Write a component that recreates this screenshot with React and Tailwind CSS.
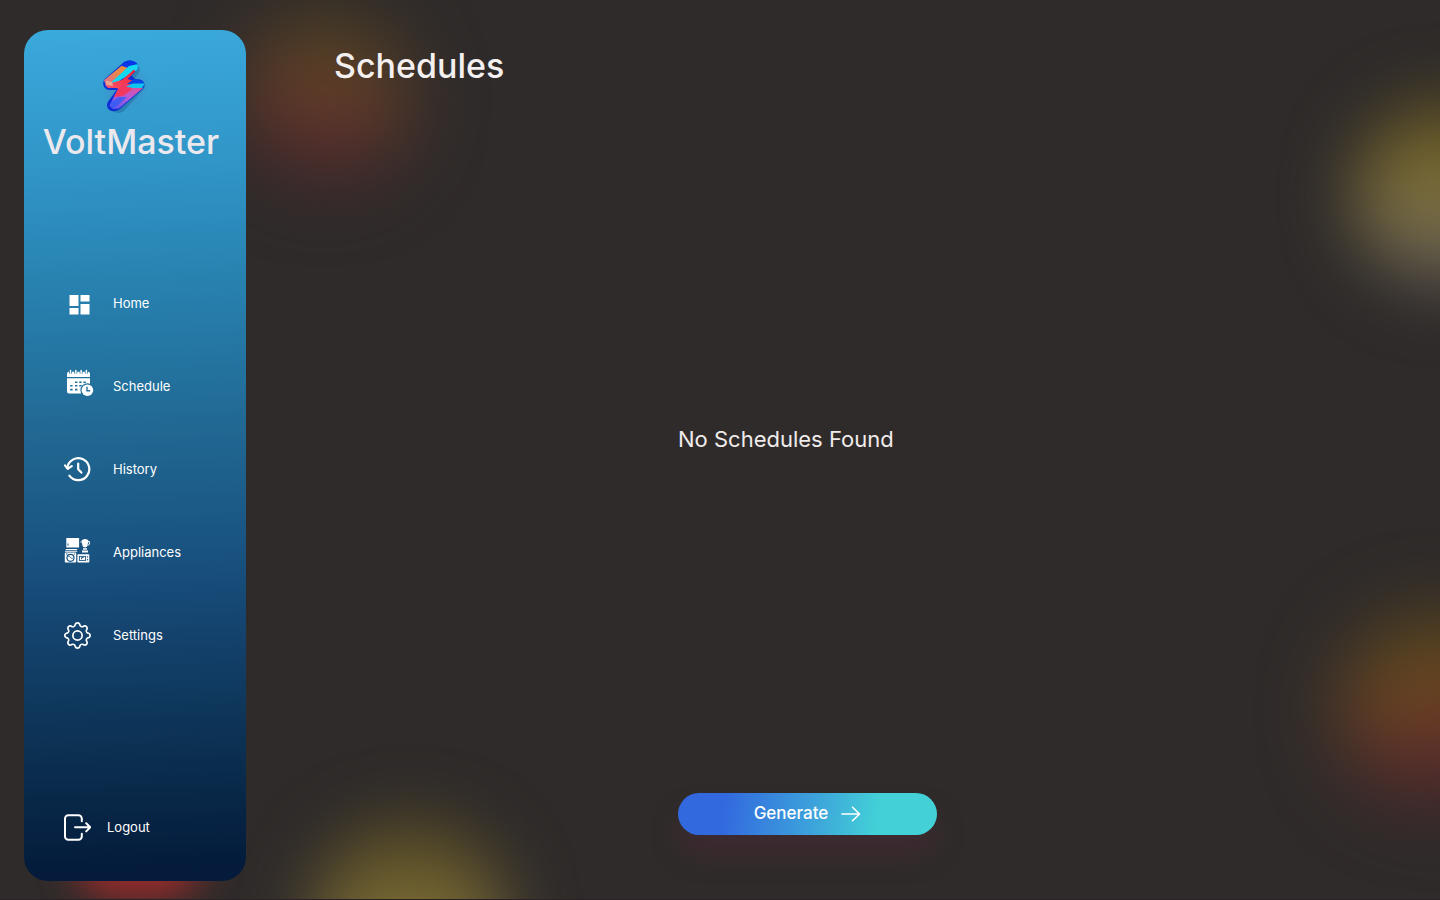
import React from "react";
import { BsGear } from "react-icons/bs";

function HomeIcon() {
  return (
    <svg width="27" height="27" viewBox="0 0 27 27" fill="currentColor" className="shrink-0" aria-hidden="true">
      <rect x="5.5" y="5" width="9" height="11" />
      <rect x="16.5" y="5" width="9" height="6.5" />
      <rect x="5.5" y="18" width="9" height="6.5" />
      <rect x="16.5" y="14" width="9" height="10.5" />
    </svg>
  );
}

function ScheduleIcon() {
  return (
    <svg width="27" height="27" viewBox="0 0 27 27" className="shrink-0 overflow-visible" aria-hidden="true">
      <path
        fill="currentColor"
        d="M5 -1.3H24a2 2 0 0 1 2 2V4H3V.7a2 2 0 0 1 2-2zM3 5.2H26V12.4A7 7 0 0 0 17.4 20.5H5a2 2 0 0 1-2-2z"
      />
      <path d="M6.500-2.500v3M11.800-2.500v3M17.100-2.500v3M22.400-2.500v3" stroke="#23739f" strokeWidth="3" />
      <path d="M6.500-2.500v2.600M11.800-2.500v2.600M17.100-2.500v2.600M22.400-2.500v2.600" stroke="currentColor" strokeWidth="1.5" strokeLinecap="round" />
      <path
        fill="#226f9b"
        d="M11 8.4h2.4v1.6H11zM15.2 8.4h2.4v1.6h-2.4zM19.4 8.4h2.4v1.6h-2.4zM6.2 12h2.4v1.6H6.2zM11 12h2.4v1.6H11zM15.2 12h2.4v1.6h-2.4zM6.2 15.8h2.4v1.6H6.2zM11 15.8h2.4v1.6H11z"
      />
      <circle cx="23.4" cy="17.2" r="7" fill="#226f9b" />
      <circle cx="23.4" cy="17.2" r="5.8" fill="currentColor" />
      <path d="M23 13.8v4h3.2" fill="none" stroke="#226f9b" strokeWidth="1.4" />
    </svg>
  );
}

function HistoryIcon() {
  return (
    <svg
      width="27" height="27" viewBox="0 0 27 27" fill="none" stroke="currentColor"
      strokeWidth="2.2" strokeLinecap="round" strokeLinejoin="round" className="shrink-0" aria-hidden="true"
    >
      <path d="M3.4 11.8A11 11 0 1 1 5.4 19.6" />
      <path d="M1 9.3l2.7 3.6 4-2.7" />
      <path d="M14.2 7.6v5.6l3.2 3.4" />
    </svg>
  );
}

function AppliancesIcon() {
  return (
    <svg width="27" height="27" viewBox="0 0 27 27" className="shrink-0 overflow-visible" aria-hidden="true">
      <g transform="translate(0 -1)">
        <g fill="currentColor">
          <rect x="2.3" y="0" width="12.8" height="9.6" rx=".6" />
          <path d="M1.8 11h11.4v.9H1.8zM1 12.8h12.2v1H1z" />
          <path d="M17.6 2.400L19 1.600Q21 .2 23.200 1.600L24.400 2.400L23.600 7.600Q23.200 9.600 21 9.600Q18.800 9.600 18.400 7.600zM19 10.3h4v1.400h-4zM18 12.600h6v1.800h-6z" />
          <rect x=".8" y="14.6" width="11.4" height="10" rx=".8" />
          <rect x="13.4" y="16.2" width="11.9" height="8.4" rx=".8" />
        </g>
        <path d="M18.200 4H16.400M24 3.600h1.400v2.800l-1.600 1" fill="none" stroke="currentColor" strokeWidth="1" />
        <g fill="none" stroke="#1a5582">
          <path d="M4 5.4v2.4" strokeWidth=".9" />
          <circle cx="6.5" cy="19.8" r="3.5" strokeWidth="1.2" />
          <path d="M4.4 18.4c1.5-.7 2.7 2.8 4.3 1.8M2 16h1.5M10 16h1" strokeWidth=".9" />
          <rect x="15.4" y="18.4" width="6.2" height="4" strokeWidth=".9" />
          <path d="M17.6 21.2v-1.6h2M23.6 18.2v1.4M23.6 21v1.4" strokeWidth="1" />
        </g>
      </g>
    </svg>
  );
}

function LogoutIcon() {
  return (
    <svg
      width="27" height="27" viewBox="0 0 27 27" fill="none" stroke="currentColor"
      strokeWidth="2" strokeLinecap="round" strokeLinejoin="round" className="shrink-0" aria-hidden="true"
    >
      <path d="M17.8 7.3V4.6A3.4 3.4 0 0 0 14.4 1.2H4.4A3.4 3.4 0 0 0 1 4.6V22.4a3.4 3.4 0 0 0 3.4 3.4h10a3.4 3.4 0 0 0 3.4-3.4V19.8" />
      <path d="M11 13.3H26M22.2 9.2l4 4.1-4 4.1" />
    </svg>
  );
}

function BoltLogo() {
  return (
    <svg width="46" height="54" viewBox="0 0 46 54" className="overflow-visible" aria-hidden="true">
      <defs>
        <linearGradient id="boltTop" x1="0" y1="1" x2="1" y2="0">
          <stop offset="0" stopColor="#d9689c" />
          <stop offset=".5" stopColor="#e98450" />
          <stop offset="1" stopColor="#f0962f" />
        </linearGradient>
        <linearGradient id="boltMid" x1="1" y1="0" x2="0" y2="1">
          <stop offset="0" stopColor="#e8203f" />
          <stop offset=".6" stopColor="#fb4052" />
          <stop offset="1" stopColor="#f05a7a" />
        </linearGradient>
        <linearGradient id="boltLow" x1=".7" y1="0" x2=".2" y2="1">
          <stop offset="0" stopColor="#e0509a" />
          <stop offset=".5" stopColor="#b55ad8" />
          <stop offset="1" stopColor="#5a58ee" />
        </linearGradient>
        <clipPath id="boltShape">
          <path d="M21.500 2.500C25-.5 31.500-.2 34.500 3C37 6 36.200 9.200 33 12L29.500 15.500L33.500 19.600H37C42.500 20.200 44 25.500 40 29.500L18.500 48.500C15 51.800 8.500 52.500 6 48.500C4 45 5.200 42 8 39L14.500 30H8C1.500 29.500-.8 23 3.200 18.500z" />
        </clipPath>
      </defs>
      <path
        fill="#1f6799"
        opacity=".5"
        d="M34 4c4 2 5 7 2 10l-3 4 4 2c6 1 8 6 4 10L21.500 51.500c-4 2-8 2-12-1z"
      />
      <g clipPath="url(#boltShape)">
        <rect x="-2" y="-2" width="50" height="58" fill="#0c2fd6" />
        <path d="M2 20L20 5.500h12L12 26.500H4z" fill="url(#boltTop)" />
        <path d="M20 6L22 0h16l-2 6-10 2z" fill="#0838e8" />
        <path d="M8 23.500L27 6l9-2v6L20 19l-9 6z" fill="#13d8f2" />
        <path d="M4 25.500l7-3 9-2.500L32 9.500l1.500 2L25.500 19l8 2.500-10 9.500L14 28H6z" fill="url(#boltMid)" />
        <path d="M4 20.500l6 1.500 1 4-6.500-1z" fill="#eda68f" />
        <path d="M15.500 30L25 24l16 4-3 2.500L17 48.500l-6 .5-3.500-3.500z" fill="url(#boltLow)" />
        <path d="M15 31l6-8 12 0-4 7-8 6-9 1z" fill="#f3385f" />
        <path d="M25 24l7-5h9l2 6z" fill="#0a45e8" />
        <path d="M24 26.500l7-3h12l-3 4.500H30z" fill="#11c6ee" />
        <path d="M8.500 42.500L17 37h8l-9 8-6 3z" fill="#2a5cf5" opacity=".75" />
      </g>
    </svg>
  );
}

function ArrowIcon() {
  return (
    <svg width="20" height="16" viewBox="0 0 20 16" fill="none" stroke="currentColor" strokeWidth="1.6" className="shrink-0" aria-hidden="true">
      <path d="M1 8H18.500M11.500 1.200L18.500 8l-7 6.800" strokeLinecap="round" />
    </svg>
  );
}

const navItems = [
  { label: "Home", icon: <HomeIcon /> },
  { label: "Schedule", icon: <ScheduleIcon /> },
  { label: "History", icon: <HistoryIcon /> },
  { label: "Appliances", icon: <AppliancesIcon /> },
  { label: "Settings", icon: <BsGear size={27} className="shrink-0" aria-hidden="true" /> },
];

function Glows() {
  return (
    <div className="pointer-events-none absolute inset-0 overflow-hidden" aria-hidden="true">
      <div className="absolute left-[242px] top-[14px] h-[170px] w-[166px] rounded-full bg-[linear-gradient(190deg,#4c411f_10%,#66402a_48%,#5a2c2a_66%,#40292f_95%)] blur-[36px]" />
      <div className="absolute -right-[110px] top-[100px] h-[190px] w-[196px] rounded-full bg-[linear-gradient(180deg,#5c4f1e_5%,#7d6e38_45%,#736a50_72%,#534d4a_95%)] blur-[34px]" />
      <div className="absolute -right-[106px] top-[615px] h-[190px] w-[206px] rounded-full bg-[linear-gradient(170deg,#54461b_10%,#6e4822_42%,#652f29_62%,#44272e_90%)] blur-[38px]" />
      <div className="absolute left-[314px] -bottom-[124px] h-[200px] w-[190px] rounded-full bg-[linear-gradient(180deg,#5a4d22_5%,#80713b_60%)] blur-[34px]" />
      <div className="absolute left-[74px] bottom-[0px] h-[84px] w-[128px] rounded-full bg-[#9a2b2b] blur-[18px]" />
    </div>
  );
}

export default function App() {
  return (
    <div className="relative flex min-h-screen overflow-hidden border-b border-[#2b2226] bg-[#2f2b2a] font-['Inter',sans-serif] text-white">
      <Glows />

      <aside className="relative mb-[18px] ml-6 mt-[30px] flex w-[222px] shrink-0 flex-col rounded-[24px] bg-[linear-gradient(178deg,#3aa9dc_0%,#3094c6_17%,#2780ae_31%,#216893_47%,#195381_61%,#13416b_72%,#0b2f50_85%,#041b3b_98%)] pb-10">
        <div className="flex flex-col items-center pr-2 pt-[30px]">
          <div className="mr-3 flex rounded-full bg-[radial-gradient(circle,#4189c2_0%,transparent_70%)]">
            <BoltLogo />
          </div>
          <p className="mt-2 text-[34px] font-medium leading-10 text-[#ece9ee]">VoltMaster</p>
        </div>

        <nav className="mt-32 flex flex-1 flex-col gap-14 pl-10" aria-label="Main">
          {navItems.map((item) => (
            <a key={item.label} href="#" className="flex h-[27px] items-center gap-[22px] text-[13px]">
              {item.icon}
              {item.label}
            </a>
          ))}
        </nav>

        <button type="button" className="ml-10 flex h-[27px] items-center gap-4 self-start text-[13px]">
          <LogoutIcon />
          Logout
        </button>
      </aside>

      <main className="relative flex flex-1 flex-col pb-16 pt-[46px]">
        <h1 className="pl-[88px] text-[34px] font-medium leading-10 text-[#f4f0f0]">Schedules</h1>
        <div className="mr-[71px] flex w-[259px] flex-1 flex-col self-center">
          <p className="flex flex-1 items-center whitespace-nowrap text-[22px] text-[#f0ecec]">No Schedules Found</p>
          <button
            type="button"
            className="flex h-[42px] items-center justify-center gap-[13px] rounded-full bg-[linear-gradient(98deg,#3269df_0%,#3269df_18%,#3c9fdb_50%,#43d1d7_77%,#43d1d7_100%)] text-[17px] font-medium shadow-[0_20px_24px_#3d2a30]"
          >
            Generate
            <ArrowIcon />
          </button>
        </div>
      </main>
    </div>
  );
}
